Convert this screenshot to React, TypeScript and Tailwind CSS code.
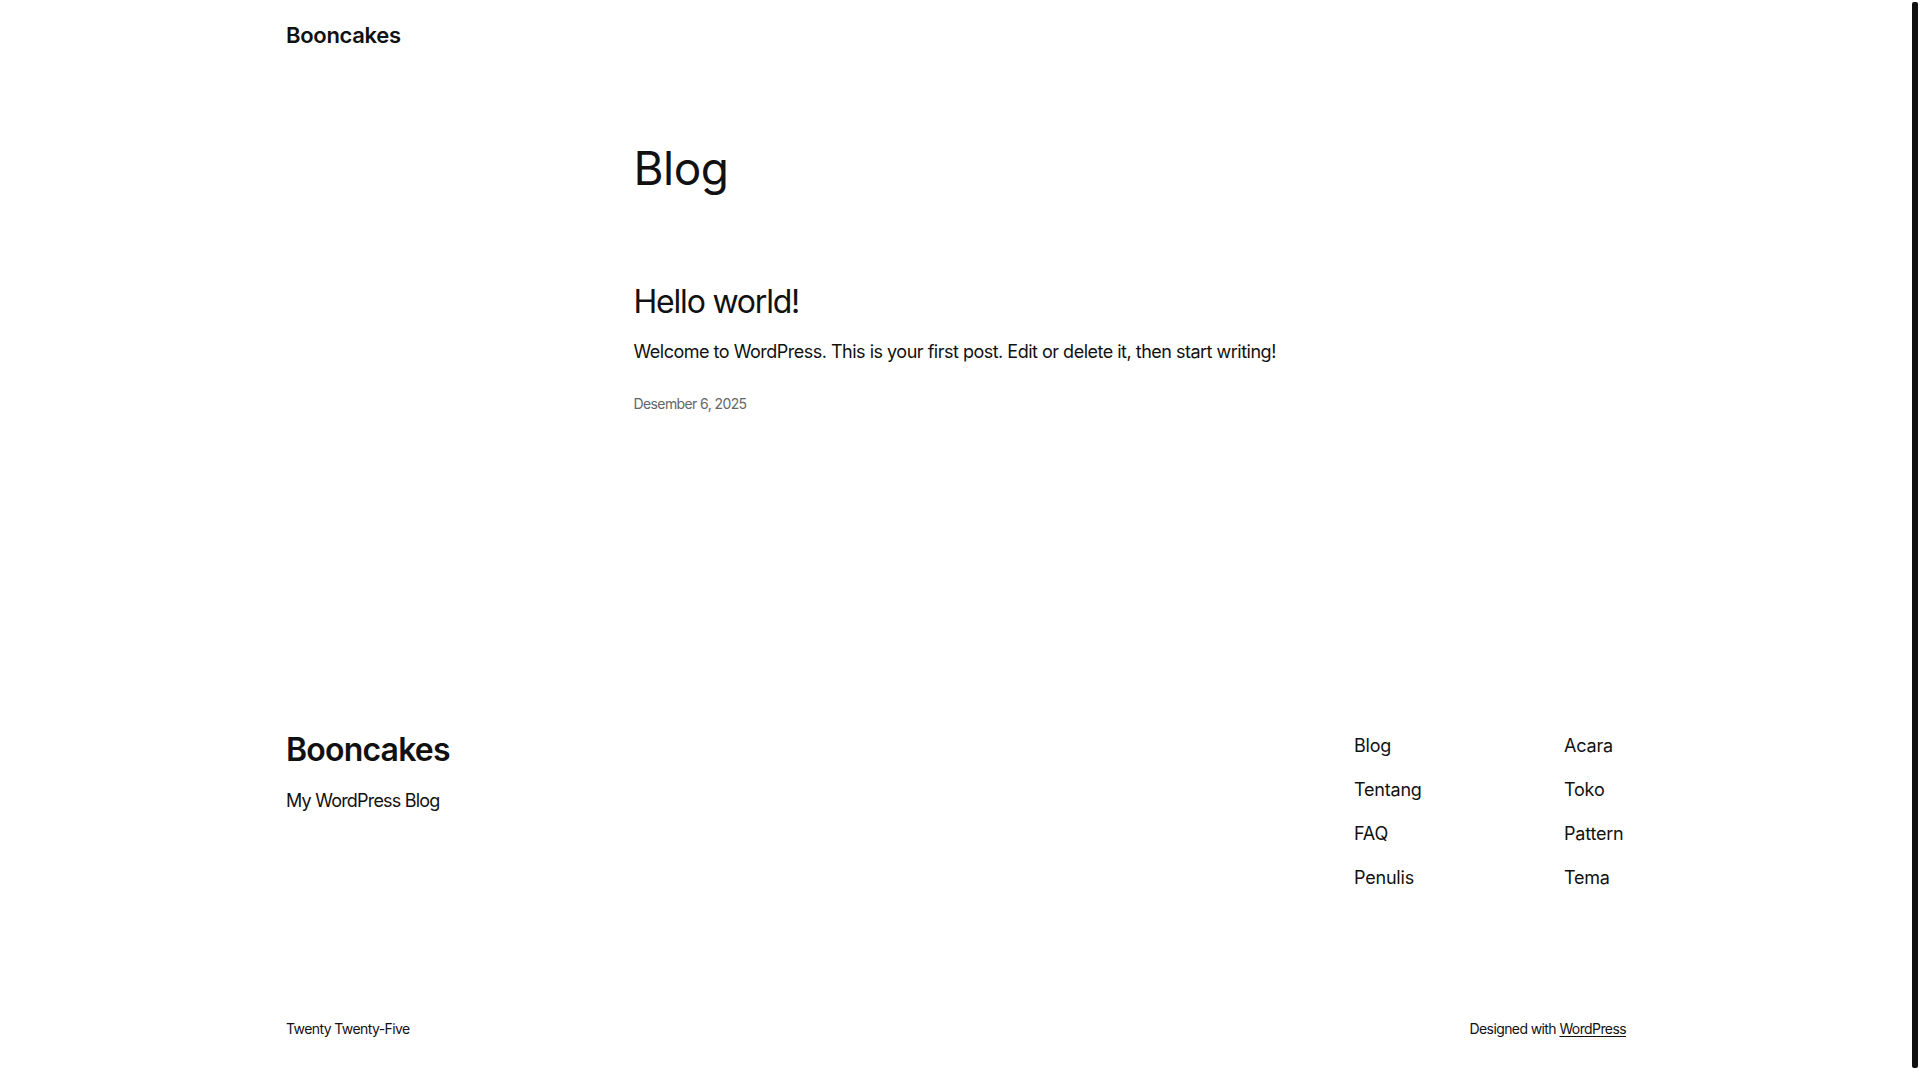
import React from "react";

const navLeft = ["Blog", "Tentang", "FAQ", "Penulis"];
const navRight = ["Acara", "Toko", "Pattern", "Tema"];

export default function App() {
  return (
    <div className="flex min-h-screen bg-white font-['Inter','Noto_Sans',sans-serif] text-[#111111]">
      <div className="flex flex-1 flex-col">
        <header className="mx-auto w-[1340px] pt-[20px]">
          <a href="#" className="text-[22px] leading-[30px] font-semibold tracking-[-0.3px]">
            Booncakes
          </a>
        </header>

        <main className="mx-auto w-[645px] pt-[91px]">
          <h1 className="text-[46px] leading-[55px] font-normal tracking-[-0.5px]">Blog</h1>
          <article className="mt-[87px]">
            <h2 className="text-[32px] leading-[38px] font-normal tracking-[-1.2px]">
              <a href="#">Hello world!</a>
            </h2>
            <p className="mt-[16px] whitespace-nowrap text-[18px] leading-[29px] tracking-[-0.5px]">
              Welcome to WordPress. This is your first post. Edit or delete it, then start writing!
            </p>
            <div className="mt-[28px] text-[14px] leading-[20px] text-[#666666] tracking-[-0.6px]">
              Desember 6, 2025
            </div>
          </article>
        </main>

        <footer className="mx-auto w-[1340px] pt-[317px]">
          <div className="flex items-start justify-between">
            <div className="flex flex-col">
              <a href="#" className="text-[32px] leading-[38px] font-semibold tracking-[-0.8px]">
                Booncakes
              </a>
              <p className="mt-[17px] text-[18px] leading-[29px] tracking-[-0.8px]">My WordPress Blog</p>
            </div>
            <nav className="grid w-[272px] grid-cols-[210px_1fr] text-[18px] leading-[29px] tracking-[-0.2px]">
              <ul className="flex flex-col gap-[15px]">
                {navLeft.map((n) => (
                  <li key={n}>
                    <a href="#">{n}</a>
                  </li>
                ))}
              </ul>
              <ul className="flex flex-col gap-[15px]">
                {navRight.map((n) => (
                  <li key={n}>
                    <a href="#">{n}</a>
                  </li>
                ))}
              </ul>
            </nav>
          </div>
          <div className="mt-[127px] flex items-center justify-between pb-[41px] text-[14px] leading-[20px] tracking-[-0.6px]">
            <p>Twenty Twenty-Five</p>
            <p>
              Designed with{" "}
              <a href="#" className="underline underline-offset-2">
                WordPress
              </a>
            </p>
          </div>
        </footer>
      </div>
      <div className="flex w-[8px] flex-col pt-[2px] pb-[12px]">
        <div className="w-[6px] flex-1 rounded-t-[2px] rounded-b-[2px] bg-[#111111]" />
      </div>
    </div>
  );
}
